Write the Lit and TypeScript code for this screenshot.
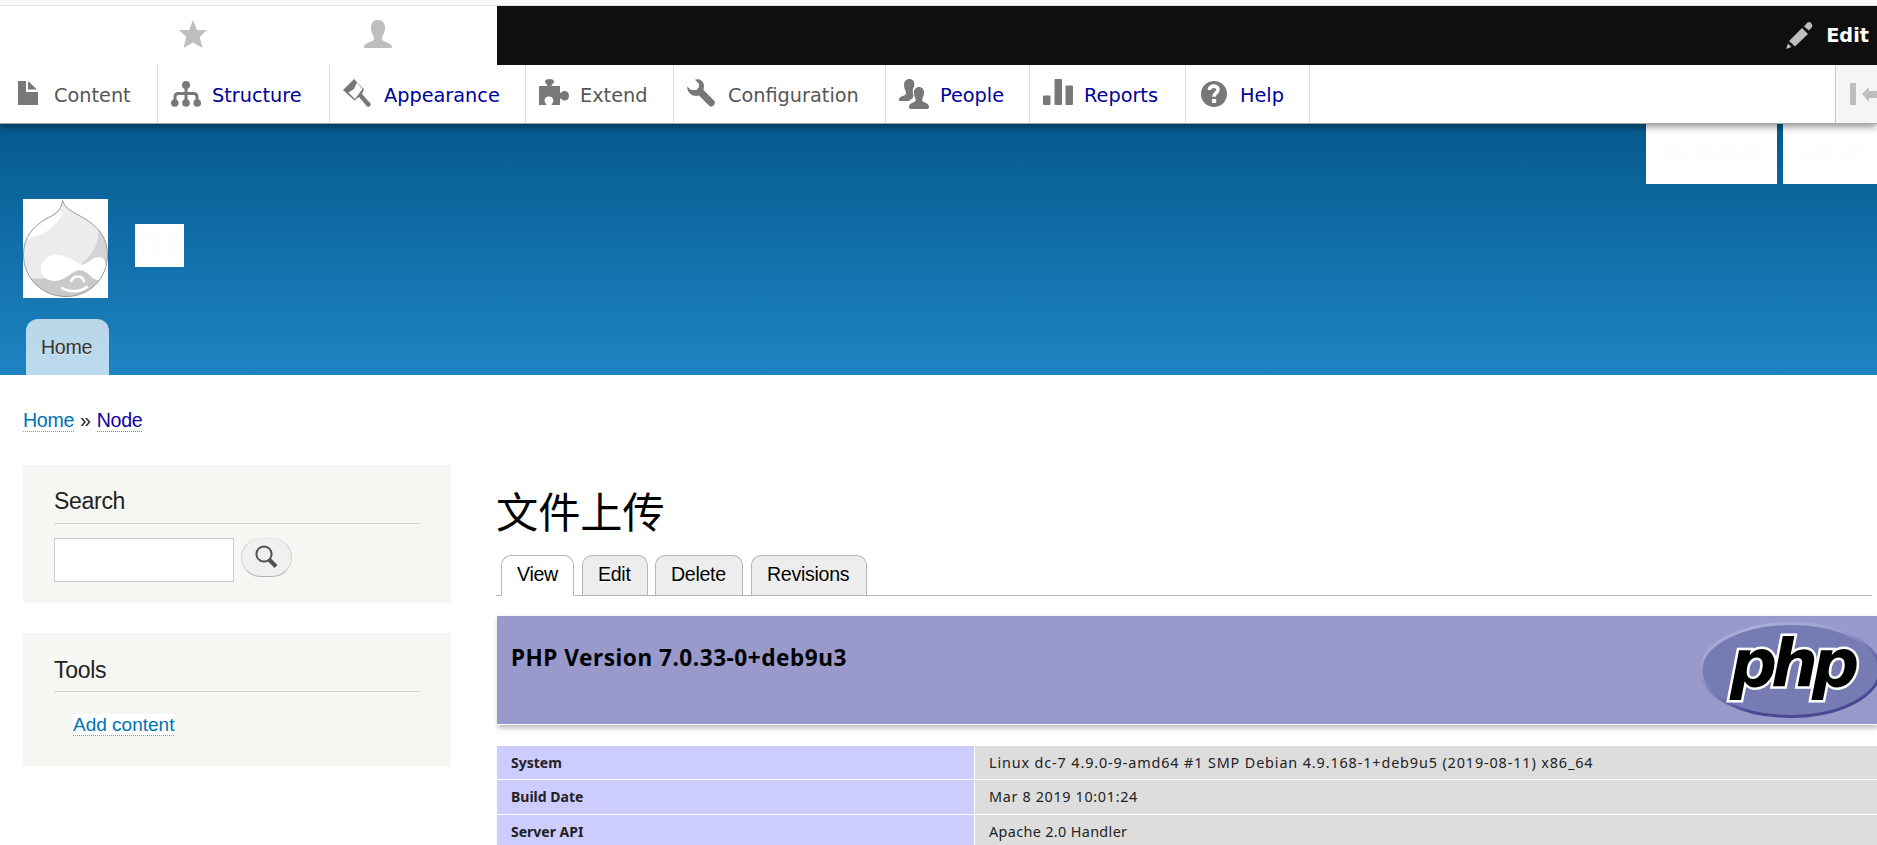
import { LitElement, html, css, svg } from "lit";
import { customElement } from "lit/decorators.js";

const G = "#787878";
const icons: Record<string, unknown> = {
  content: svg`<path fill=${G} d="M5 2h8v11h12v13H5z M15 2v8.5h9z"/>`,
  structure: svg`<g fill=${G}><circle cx="15" cy="6" r="4"/><circle cx="3.8" cy="24" r="3.8"/><circle cx="15" cy="24" r="3.8"/><circle cx="26.2" cy="24" r="3.8"/></g><path fill="none" stroke=${G} stroke-width="3" d="M15 8v14M4 22v-4q0-3.500 3.500-3.500h15q3.500 0 3.500 3.500v4"/>`,
  appearance: svg`<path fill=${G} d="M11 0L0 11l11.500 10.500 4.500-3.500L24 27.500q3 1.500 4-2.500L19 15l2-4.500z"/><path fill="#fff" d="M14 3.500L19.500 10 12 20 5.500 13.500 11 10z"/>`,
  extend: svg`<path fill=${G} d="M0 7h8.500c-.2-2-2.500-2.500-2.500-4.500Q6 0 10.500 0T15 2.500C15 4.500 12.500 5 12.500 7H21v7c1.500 0 2-2 4.500-2 3 0 4.500 2.300 4.500 5s-1.500 4.500-4.500 4.500c-2.500 0-3-2-4.500-2V26h-8.500c0-1.500 1.800-2 1.800-4.500 0-2.400-1.800-4-4.300-4s-4.500 1.600-4.500 4 2 3 2 4.500H0z"/>`,
  configuration: svg`<path fill=${G} d="M8 .8C12 -1 17 2 17 7c0 2-.5 3-.5 4L27.500 22c1.500 2.500-1.500 6.500-4.500 5.500L12 16.500c-1.500.5-3.500.5-5.500 0C2 15 0 11 .2 7.500L4 11h5.500l2.500-3V5z"/>`,
  people: svg`<path fill=${G} d="M10.500 0c3 0 4.800 2.200 4.800 5 0 1.500-.2 2.500-.6 3.300-1.400 2-1.200 5.200-.2 8.200l-.5 2.500c-1.500 1.200-3 2-4 3H1c-1.500 0-1.300-3 .5-4 2.500-1.300 5.500-1.600 5.500-4 0-1.800-2-4-2-8C5 2.500 7 0 10.500 0z"/><path fill=${G} d="M20 8c3 0 5 2.300 5 5.500 0 4-1.800 5.500-1.800 7.500 0 2.800 6.800 2.500 6.800 6.500 0 1.500-.5 2.500-1.500 2.500h-17C10.500 30 10 29 10 27.500c0-4 6.700-3.700 6.700-6.500 0-2-1.700-3.500-1.700-7.500C15 10.300 17 8 20 8z"/>`,
  reports: svg`<g fill=${G}><rect x="0" y="16.500" width="7.500" height="9.500" rx="1"/><rect x="11.500" y="0" width="7.500" height="26" rx="1"/><rect x="22.500" y="6.500" width="7.500" height="19.500" rx="1"/></g>`,
  help: svg`<circle cx="15" cy="15" r="13" fill=${G}/><path fill="none" stroke="#fff" stroke-width="3.600" d="M10.300 11C10.500 5.800 19 6 19 10.500c0 3.500-4 3.300-4 7.300"/><rect x="13" y="20" width="4.200" height="4" fill="#fff"/>`,
};

const menu: [string, string, number, boolean][] = [
  ["content", "Content", 158, false],
  ["structure", "Structure", 172, true],
  ["appearance", "Appearance", 196, true],
  ["extend", "Extend", 148, false],
  ["configuration", "Configuration", 212, false],
  ["people", "People", 144, true],
  ["reports", "Reports", 156, true],
  ["help", "Help", 124, true],
];

const rows = [
  ["System", "Linux dc-7 4.9.0-9-amd64 #1 SMP Debian 4.9.168-1+deb9u5 (2019-08-11) x86_64", "wide"],
  ["Build Date", "Mar 8 2019 10:01:24", "mid"],
  ["Server API", "Apache 2.0 Handler", ""],
];

@customElement("app-root")
export class AppRoot extends LitElement {
  static styles = css`
    :host { display: block; width: 1877px; height: 845px; overflow: hidden; background: #fff; color: #222;
      font-family: "Liberation Sans", Arial, sans-serif; font-size: 19.600px; letter-spacing: -.3px; }
    * { box-sizing: border-box; }
    svg { display: block; flex: none; }
    .strip { height: 6px; background: #f9f9f9; border-bottom: 1px solid #dcdfdc; position: relative; z-index: 3; }
    .bar { height: 59px; display: flex; background: #0f0f0f; letter-spacing: 0; position: relative; z-index: 3; }
    .bar-tabs { width: 497px; background: #fff; display: flex; align-items: flex-start; padding: 14px 0 0 179px; gap: 157px; }
    .edit { margin-left: auto; display: flex; align-items: center; gap: 13px; padding-right: 8px; color: #fff; font: 700 19.300px/59px "DejaVu Sans", sans-serif; }
    .tray { height: 59px; display: flex; background: #fff; border-bottom: 1px solid #a9a9a9; position: relative; z-index: 2;
      box-shadow: 0 2px 8px rgba(0,0,0,.5); font-family: "DejaVu Sans", sans-serif; font-size: 19.300px; letter-spacing: 0; }
    .item { display: flex; align-items: flex-start; padding: 14px 0 0 13px; gap: 11px; border-right: 1px solid #ddd; color: #565656; white-space: nowrap; }
    .item.link { color: #000099; }
    .item span { line-height: 33px; }
    .collapse { margin-left: auto; width: 42px; background: #f5f5f5; border-left: 1px solid #c8c8c8; padding: 18px 0 0 14px; overflow: hidden; }
    .header { height: 251px; background: linear-gradient(#055a8e, #1d84c3); display: flex; flex-direction: column; }
    .account { display: flex; justify-content: flex-end; gap: 6px; height: 60px; color: #fdfdfd; line-height: 54px; }
    .account div { background: #fff; height: 60px; padding-left: 16px; }
    .a1 { width: 131px; } .a2 { width: 94px; }
    .brand { display: flex; gap: 27px; padding: 15px 0 0 23px; height: 135px; }
    .logo { width: 85px; height: 99px; background: #fff; }
    .site { margin-top: 25px; width: 49px; height: 43px; background: #fff; color: #fdfdfd; font-size: 33px; line-height: 43px; padding-left: 3px; }
    .home { margin-left: 26px; width: 83px; height: 56px; border-radius: 12px 12px 0 0; background: rgba(255,255,255,.7); color: #333; text-shadow: 0 1px #eee;
      line-height: 56px; padding-left: 15px; }
    .crumbs { padding: 33px 0 0 23px; height: 90px; line-height: 24px; display: flex; gap: 6px; }
    .crumbs a { height: 24px; border-bottom: 1px dotted #5fa9d2; color: #0071b3; }
    .crumbs a.v { color: #0f00a0; border-color: #7d78bd; }
    .main { display: grid; grid-template-columns: 428px 1380px; column-gap: 46px; padding-left: 23px; }
    .side { display: flex; flex-direction: column; gap: 30px; }
    .block { background: #f6f6f2; padding: 0 31px; }
    .block h2 { margin: 0; font-weight: 400; font-size: 23px; letter-spacing: -.3px; line-height: 26px; padding-top: 23px; height: 59px; border-bottom: 1px solid #d3d3d0; color: #222; text-shadow: 0 1px #fff; }
    .b1 { height: 138px; } .b2 { height: 133px; }
    .b2 h2 { padding-top: 24px; }
    .form { display: flex; gap: 7px; padding-top: 14px; }
    .input { width: 180px; height: 44px; background: #fff; border: 1px solid #ccc; }
    .btn { width: 51px; height: 39px; border-radius: 20px; background: #f0f0f0; border: 1px solid; border-color: #e4e4e4 #d2d2d2 #b4b4b4; display: flex; padding: 6px 0 0 13px; }
    .add { display: inline-block; margin: 22px 0 0 19px; background: #fff; border-bottom: 1px dotted #6f9fc4; color: #0071b3; line-height: 21px; height: 22px; font-size: 19px; letter-spacing: 0; }
    h1 { margin: 0; font: 400 42.200px/50px "Noto Sans CJK SC", sans-serif; letter-spacing: 0; color: #000; padding-top: 20px; margin-left: -1px; height: 90px; white-space: nowrap; }
    .tabs { display: flex; align-items: flex-end; height: 41px; width: 1376px; margin-left: -1px; border-bottom: 1px solid #b6b6b6; padding-left: 5px; }
    .tab { height: 40px; border: 1px solid #b6b6b6; border-bottom: 0; border-radius: 10px 10px 0 0; background: #ededed; color: #000; text-shadow: 0 1px #fff; line-height: 36px; padding-left: 15px; }
    .tab.on { background: #fff; height: 41px; margin-bottom: -1px; border-bottom: 1px solid #fff; }
    .view { width: 73px; margin-right: 8px; } .ed { width: 66px; margin-right: 7px; } .del { width: 88px; margin-right: 8px; } .rev { width: 116px; }
    .php { margin-top: 20px; height: 109px; background: #9999cc; border-bottom: 1px solid #fff; box-shadow: 1px 3px 5px #bbb; display: flex; justify-content: space-between; color: #000; font: 700 22.600px/30px "Noto Sans", sans-serif; letter-spacing: .52px; }
    .php h3 { margin: 0; font: inherit; padding: 27px 0 0 14px; white-space: nowrap; }
    .php svg { margin-top: 4px; letter-spacing: 0; }
    .table { margin-top: 21px; font: 14px/20px "Noto Sans", sans-serif; letter-spacing: 0; }
    .row { display: grid; grid-template-columns: 477px 1fr; column-gap: 1px; border-bottom: 1px solid #fff; height: 35px; white-space: nowrap; }
    .row:first-child { height: 34px; }
    .row > * { padding: 7px 0 0 14px; }
    .k { background: #ccccff; font-weight: 700; }
    .d { background: #ddd; font-size: 14.400px; letter-spacing: .35px; }
    .d.wide { letter-spacing: .87px; } .d.mid { letter-spacing: .65px; }
  `;
  render() {
    return html`
      <div class="strip"></div>
      <div class="bar">
        <div class="bar-tabs">
          <svg width="28" height="28"><path fill="#bebebe" d="M14 0l4 10h10l-7.300 7L23.500 28 14 22.500 4.500 28 7.300 17 0 10h10z"/></svg>
          <svg width="28" height="28"><path fill="#bebebe" d="M14 0c5 0 7 3 7 8 0 5.500-3 7.500-3 10.500 0 4.500 10 3 10 9 0 .5-.5.500-1 .5H1c-.5 0-1 0-1-.5 0-6 10-4.500 10-9C10 15.500 7 13.500 7 8c0-5 2-8 7-8z"/></svg>
        </div>
        <div class="edit">
          <svg width="27" height="27"><path fill="#bebebe" d="M0 27l2-5.500 3.500 3.500z M3 19L16 6l6 6L9 24.500z M18 4.500l3-3.500q2-2 4 0t1 4l-3 3.500z"/></svg>
          <span>Edit</span>
        </div>
      </div>
      <div class="tray">
        ${menu.map(([id, label, w, link]) => html`<div class="item ${link ? "link" : ""}" style="width:${w}px">
          <svg width="30" height="30">${icons[id]}</svg><span>${label}</span></div>`)}
        <div class="collapse"><svg width="32" height="22"><path fill="#bebebe" d="M0 0h6v22H0z M12 11l7-7v4h13v7H19v4z"/></svg></div>
      </div>
      <div class="header">
        <div class="account"><div class="a1">My account</div><div class="a2">Log out</div></div>
        <div class="brand">
          <svg class="logo" viewBox="0 0 85 99">
            <path fill="#ececec" d="M39.500 1.500C42 10 50 13 58 17.500 74 26 84.500 38 84.500 55.500 84.500 80 66 97.500 43 97.500S.5 80 .5 55.500C.5 38 10 28 22 20.500 32 15 38.500 12 39.500 1.500z"/>
            <path fill="#d4d4d4" d="M75 30c6 7 9.500 15 9.500 25.500 0 24-18 42-41.500 42-15 0-28-7-35.500-18C40 82 78 62 75 30z"/>
            <path fill="#cacaca" d="M7.500 79.500C25 82 48 73 60 69c9 4 18 12 22 1C76 87 62 97.500 43 97.500c-15 0-28-7-35.500-18z"/>
            <path fill="#fff" d="M4 38c3-9 11-14 20-18 7-3 12-6 15-9 1 10-13 23-28 27-4 1-8 4-7 0z"/>
            <path fill="#fff" d="M18 70c0-9 7-14 16-14 11 0 19 8 25 10 6-1 10-8 17-8 5 0 7 5 7 10 0 7-4 13-8 13-6 0-11-10-18-10S42 82 32 82c-9 0-14-5-14-12z"/>
            <path fill="none" stroke="#fff" stroke-width="2.600" stroke-linecap="round" d="M48 82c3-6 11-6 13 0M39 89c8 5 18 4 25-1"/>
            <path fill="none" stroke="#999" d="M39.500 1.500C42 10 50 13 58 17.500 74 26 84.500 38 84.500 55.500 84.500 80 66 97.500 43 97.500S.5 80 .5 55.500C.5 38 10 28 22 20.500 32 15 38.500 12 39.500 1.500z"/>
          </svg>
          <div class="site">D7</div>
        </div>
        <div class="home">Home</div>
      </div>
      <div class="crumbs"><a>Home</a><span>»</span><a class="v">Node</a></div>
      <div class="main">
        <div class="side">
          <div class="block b1"><h2>Search</h2>
            <div class="form"><div class="input"></div>
              <div class="btn"><svg width="24" height="24"><circle cx="9" cy="9" r="7.600" fill="none" stroke="#505050" stroke-width="2"/><path stroke="#505050" stroke-width="4" d="M14 14.500l7 7"/></svg></div>
            </div></div>
          <div class="block b2"><h2>Tools</h2><a class="add">Add content</a></div>
        </div>
        <div>
          <h1>文件上传</h1>
          <div class="tabs">
            <div class="tab on view">View</div>
            <div class="tab ed">Edit</div>
            <div class="tab del">Delete</div>
            <div class="tab rev">Revisions</div>
          </div>
          <div class="php"><h3>PHP Version 7.0.33-0+deb9u3</h3>
            <svg width="176" height="100"><defs><linearGradient id="g" x1=".2" y1="0" x2=".8" y2="1"><stop offset="0" stop-color="#aeb2dd"/><stop offset=".3" stop-color="#9b9fd0"/><stop offset=".5" stop-color="#777bb3"/><stop offset=".75" stop-color="#484893"/></linearGradient></defs>
              <ellipse cx="89.500" cy="50" rx="89.500" ry="46.500" fill="#777bb3" stroke="url(#g)" stroke-width="3"/>
              <text x="29 70 111" y="66" font-family="DejaVu Sans" font-weight="700" font-style="italic" font-size="66" fill="#000" stroke="#fff" stroke-width="5" paint-order="stroke">php</text></svg>
          </div>
          <div class="table">${rows.map(([k, d, c]) => html`<div class="row"><div class="k">${k}</div><div class="d ${c}">${d}</div></div>`)}</div>
        </div>
      </div>`;
  }
}
